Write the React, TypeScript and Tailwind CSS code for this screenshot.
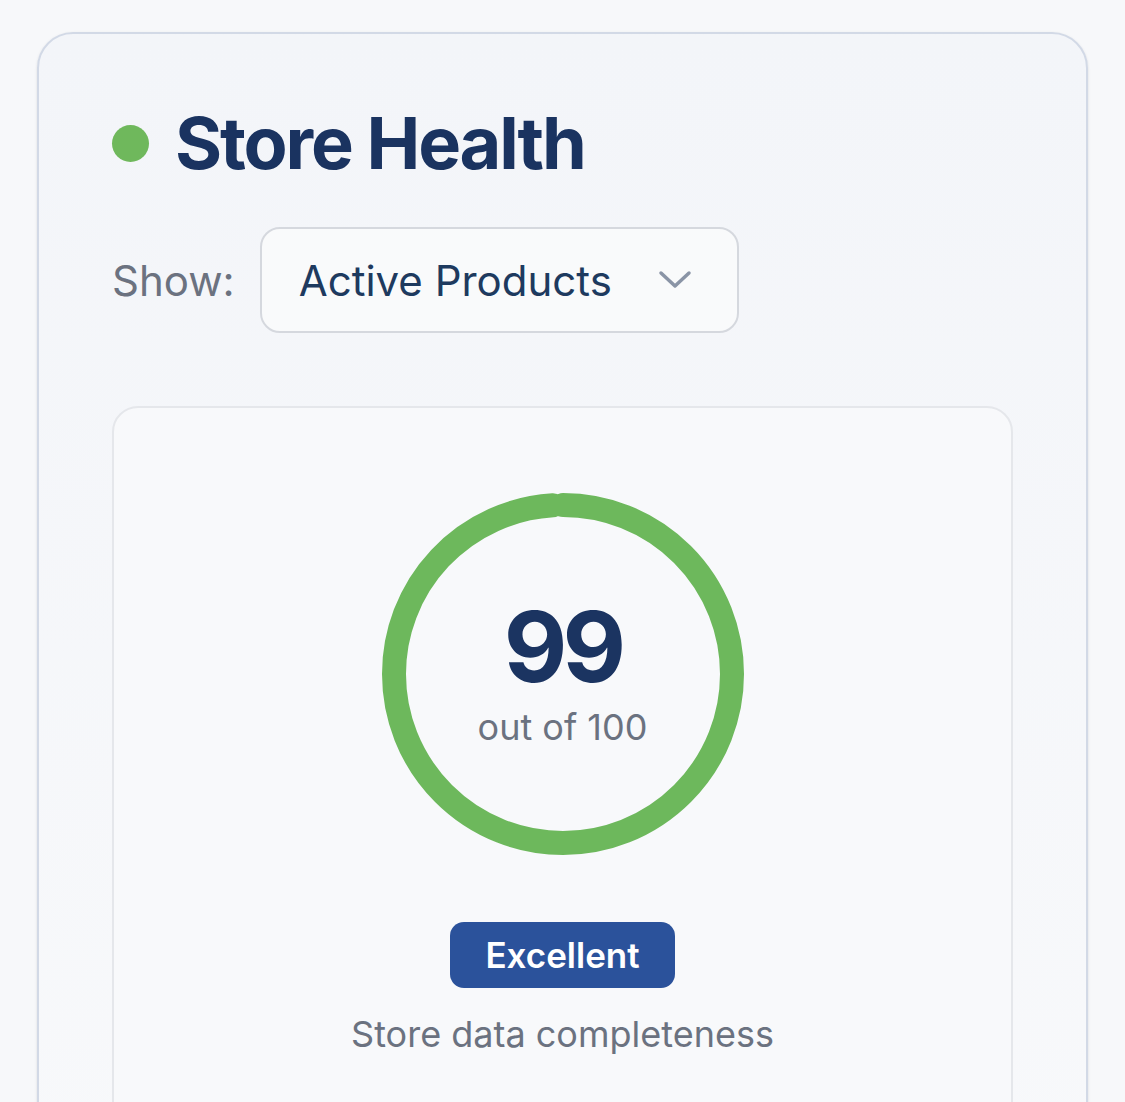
import React from "react";

function ScoreRing({ score }: { score: number }) {
  const size = 362;
  const stroke = 24;
  const r = (size - stroke) / 2;
  const c = 2 * Math.PI * r;
  return (
    <div className="relative w-[362px] h-[362px]">
      <svg width={size} height={size} className="-rotate-90">
        <circle
          cx={size / 2}
          cy={size / 2}
          r={r}
          fill="none"
          stroke="#6db85c"
          strokeWidth={stroke}
          strokeLinecap="round"
          strokeDasharray={`${(c * score) / 100} ${c}`}
        />
      </svg>
      <div className="absolute inset-0 flex flex-col items-center justify-center pb-[5px]">
        <div className="text-[98px] leading-none font-bold text-[#1b3461] tracking-[-0.05em]">{score}</div>
        <div className="mt-[13px] text-[36px] leading-none text-[#6b7280]">out of 100</div>
      </div>
    </div>
  );
}

export default function App() {
  return (
    <div className="min-h-screen bg-[#f7f8fa] px-[37px] pt-[32px] pb-[40px] font-['Inter',sans-serif]">
      <div className="rounded-[36px] border-2 border-[#d2d9e6] bg-gradient-to-b from-[#f3f5f9] to-[#f8f9fb] px-[73px] pt-[66px] pb-[80px] shadow-sm">
        {/* Header */}
        <div className="flex items-center gap-[26px]">
          <span className="w-[37px] h-[37px] rounded-full bg-[#6fb85c] shrink-0" />
          <h1 className="text-[72px] leading-[1.2] font-bold text-[#1a3360] tracking-[-0.03em]">
            Store Health
          </h1>
        </div>

        {/* Filtro */}
        <div className="mt-[41px] flex items-center gap-[25px]">
          <span className="text-[42px] text-[#6b7280]">Show:</span>
          <div className="flex items-center justify-between w-[479px] h-[106px] rounded-[20px] border-2 border-[#d5d8de] bg-[#f9fafb] pl-[37px] pr-[45px]">
            <span className="text-[42px] text-[#1e3a5f]">Active Products</span>
            <svg width="34" height="20" viewBox="0 0 34 20" fill="none">
              <path d="M3 3 L17 16 L31 3" stroke="#8a94a6" strokeWidth="3.5" strokeLinecap="round" strokeLinejoin="round" />
            </svg>
          </div>
        </div>

        {/* Score */}
        <div className="mt-[73px] rounded-[26px] border-2 border-[#e5e7eb] bg-[#f8f9fb] pt-[85px] pb-[120px] flex flex-col items-center">
          <ScoreRing score={99} />
          <span className="mt-[67px] h-[66px] px-[35px] rounded-[14px] bg-[#2b529b] text-white text-[35px] font-semibold flex items-center">
            Excellent
          </span>
          <p className="mt-[19px] text-[36px] leading-[1.5] text-[#6b7280]">Store data completeness</p>
        </div>
      </div>
    </div>
  );
}
